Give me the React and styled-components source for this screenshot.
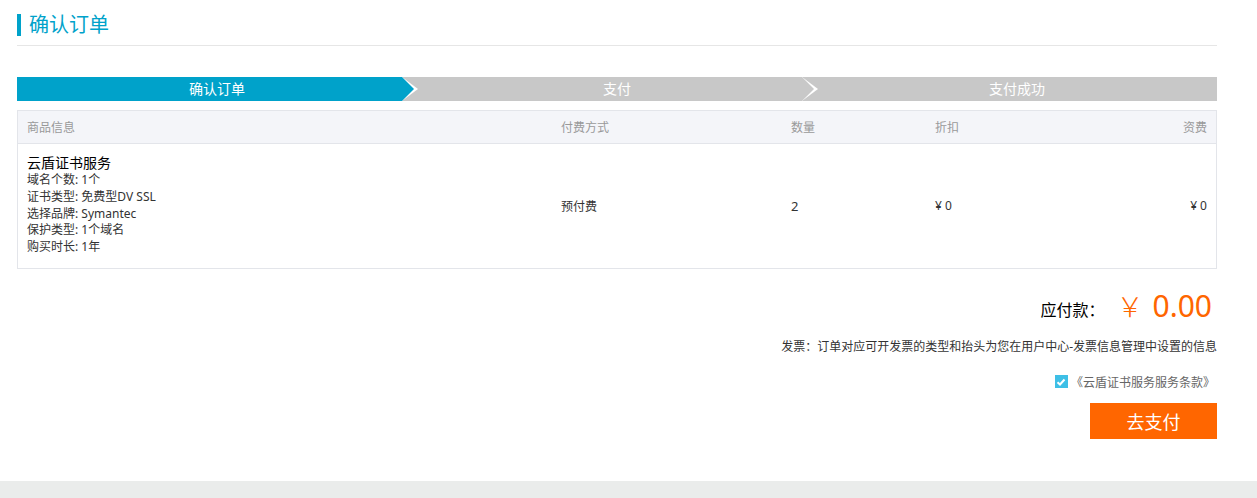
import React from 'react';
import styled, { createGlobalStyle } from 'styled-components';

const GlobalStyle = createGlobalStyle`
  html, body {
    margin: 0;
    padding: 0;
    background: #fff;
  }
  body {
    font-family: "Noto Sans", "Noto Sans CJK SC", sans-serif;
    color: #333;
  }
`;

const BLUE = '#00a2ca';
const GREY = '#c8c8c8';

const Page = styled.div`
  min-height: 498px;
  display: flex;
  flex-direction: column;
`;

const Main = styled.main`
  width: 1200px;
  margin-left: 17px;
  flex: 1;
`;

const TitleBar = styled.div`
  display: flex;
  align-items: center;
  height: 46px;
  border-bottom: 1px solid #e6e6e6;
  box-sizing: border-box;
  padding-top: 4px;
`;

const Mark = styled.span`
  width: 4px;
  height: 22px;
  background: ${BLUE};
  margin-right: 8px;
`;

const Title = styled.h1`
  margin: 0;
  font-size: 20px;
  font-weight: normal;
  color: ${BLUE};
  line-height: 24px;
`;

const Steps = styled.div`
  display: flex;
  margin-top: 31px;
  height: 24px;
`;

const Step = styled.div`
  position: relative;
  flex: 1;
  background: ${p => (p.$last
    ? GREY
    : `linear-gradient(to right, ${p.$active ? BLUE : GREY} calc(100% - 15px), ${GREY} calc(100% - 15px))`)};
  color: #fff;
  font-size: 14px;
  line-height: 24px;
  text-align: center;

  &::before, &::after {
    content: '';
    display: ${p => (p.$last ? 'none' : 'block')};
    position: absolute;
    top: 0;
    left: calc(100% - 15px);
    border-style: solid;
  }
  &::before {
    border-width: 12px 0 12px 16px;
    border-color: transparent transparent transparent #fff;
    z-index: 1;
  }
  &::after {
    border-width: 12px 0 12px 12px;
    border-color: transparent transparent transparent ${p => (p.$active ? BLUE : GREY)};
    z-index: 2;
  }
`;

const Table = styled.div`
  margin-top: 9px;
  border: 1px solid #e3e5ea;
`;

const Row = styled.div`
  display: grid;
  grid-template-columns: 534px 230px 144px 1fr 1fr;
  align-items: center;
  padding: 0 9px;
  background: ${p => (p.$head ? '#f4f5f9' : '#fff')};
  border-bottom: ${p => (p.$head ? '1px solid #e3e5ea' : 'none')};
  min-height: ${p => (p.$head ? '32px' : 'auto')};
`;

const Cell = styled.div`
  font-size: ${p => p.$size || 12}px;
  color: ${p => (p.$muted ? '#999' : '#333')};
  text-align: ${p => (p.$right ? 'right' : 'left')};
`;

const Product = styled.div`
  padding: 9px 0 12px;
`;

const ProductName = styled.div`
  font-size: 14px;
  color: #000;
  line-height: 19px;
`;

const Spec = styled.div`
  font-size: 12px;
  color: #333;
  line-height: 16.8px;
`;

const Summary = styled.div`
  display: flex;
  flex-direction: column;
  align-items: flex-end;
`;

const Total = styled.div`
  display: flex;
  align-items: center;
  margin-top: 17px;
  padding-right: 5px;
  height: 40px;
`;

const TotalLabel = styled.span`
  font-size: 16px;
  color: #000;
  margin-right: 12px;
  margin-top: 6px;
`;

const Yen = styled.span`
  font-size: 27px;
  color: #ff6600;
  font-weight: 300;
  margin-right: 9px;
`;

const Amount = styled.span`
  font-size: 30px;
  color: #ff6600;
`;

const Invoice = styled.div`
  font-size: 12px;
  color: #333;
  margin-top: 11px;
`;

const Agree = styled.label`
  display: flex;
  align-items: center;
  margin-top: 18px;
  padding-right: 2px;
  font-size: 12px;
  color: #666;
`;

const Box = styled.span`
  width: 13px;
  height: 13px;
  background: #3ebfe6;
  display: inline-flex;
  align-items: center;
  justify-content: center;
  margin-right: 3px;
`;

const PayButton = styled.button`
  margin-top: 12px;
  width: 127px;
  height: 36px;
  border: none;
  background: #ff6600;
  color: #fff;
  font-family: inherit;
  font-size: 18px;
  cursor: pointer;
`;

const Footer = styled.footer`
  height: 17px;
  background: #eaeceb;
`;

const specs = [
  '域名个数: 1个',
  '证书类型: 免费型DV SSL',
  '选择品牌: Symantec',
  '保护类型: 1个域名',
  '购买时长: 1年',
];

export default function App() {
  return (
    <Page>
      <GlobalStyle />
      <Main>
        <TitleBar>
          <Mark />
          <Title>确认订单</Title>
        </TitleBar>
        <Steps>
          <Step $active>确认订单</Step>
          <Step>支付</Step>
          <Step $last>支付成功</Step>
        </Steps>
        <Table>
          <Row $head>
            <Cell $muted>商品信息</Cell>
            <Cell $muted>付费方式</Cell>
            <Cell $muted>数量</Cell>
            <Cell $muted>折扣</Cell>
            <Cell $muted $right>资费</Cell>
          </Row>
          <Row>
            <Product>
              <ProductName>云盾证书服务</ProductName>
              {specs.map(s => <Spec key={s}>{s}</Spec>)}
            </Product>
            <Cell>预付费</Cell>
            <Cell $size={13}>2</Cell>
            <Cell>¥ 0</Cell>
            <Cell $right>¥ 0</Cell>
          </Row>
        </Table>
        <Summary>
          <Total>
            <TotalLabel>应付款：</TotalLabel>
            <Yen>￥</Yen>
            <Amount>0.00</Amount>
          </Total>
          <Invoice>发票：订单对应可开发票的类型和抬头为您在用户中心-发票信息管理中设置的信息</Invoice>
          <Agree>
            <Box>
              <svg width="10" height="10" viewBox="0 0 10 10">
                <path d="M1.5 5.2 L4 7.5 L8.5 2.5" fill="none" stroke="#fff" strokeWidth="2" />
              </svg>
            </Box>
            《云盾证书服务服务条款》
          </Agree>
          <PayButton>去支付</PayButton>
        </Summary>
      </Main>
      <Footer />
    </Page>
  );
}
